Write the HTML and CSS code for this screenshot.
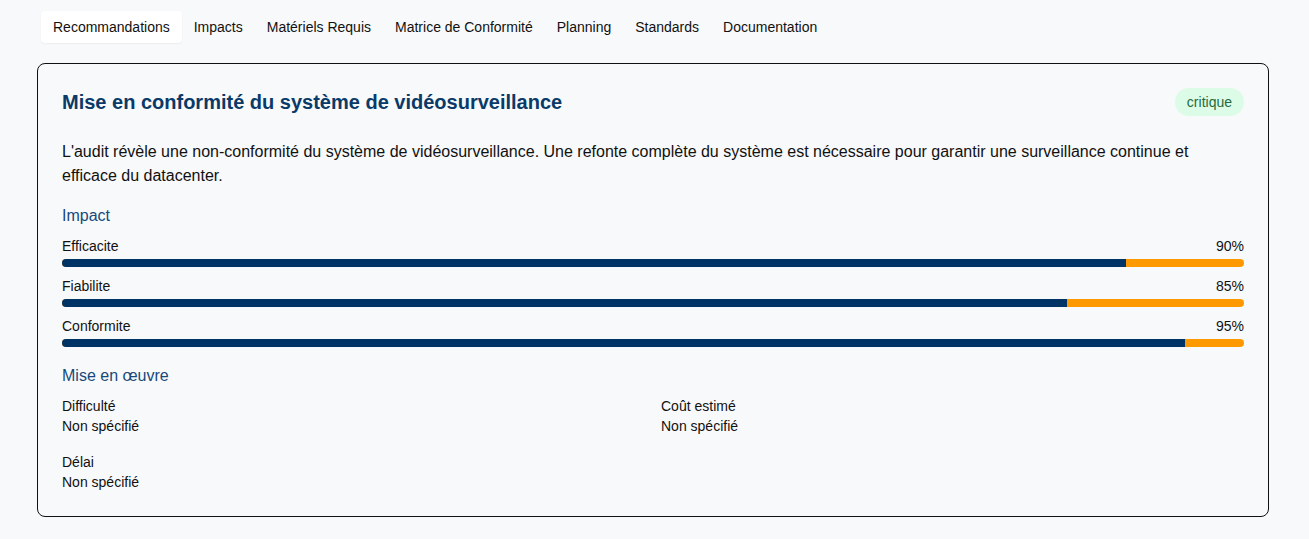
FILE: index.html
```html
<!DOCTYPE html>
<html lang="fr">
<head>
<meta charset="utf-8">
<title>Recommandations</title>
<link rel="stylesheet" href="styles.css">
</head>
<body>
<div class="page">
  <nav class="tabs">
    <div class="tab active">Recommandations</div>
    <div class="tab">Impacts</div>
    <div class="tab">Matériels Requis</div>
    <div class="tab">Matrice de Conformité</div>
    <div class="tab">Planning</div>
    <div class="tab">Standards</div>
    <div class="tab">Documentation</div>
  </nav>
  <section class="card">
    <header class="card-head">
      <h2 class="title">Mise en conformité du système de vidéosurveillance</h2>
      <span class="badge">critique</span>
    </header>
    <p class="desc">L'audit révèle une non-conformité du système de vidéosurveillance. Une refonte complète du système est nécessaire pour garantir une surveillance continue et efficace du datacenter.</p>
    <h3 class="section">Impact</h3>
    <div class="metrics">
      <div class="metric">
        <div class="metric-row"><span>Efficacite</span><span>90%</span></div>
        <div class="track"><div class="fill" style="width:90%"></div></div>
      </div>
      <div class="metric">
        <div class="metric-row"><span>Fiabilite</span><span>85%</span></div>
        <div class="track"><div class="fill" style="width:85%"></div></div>
      </div>
      <div class="metric">
        <div class="metric-row"><span>Conformite</span><span>95%</span></div>
        <div class="track"><div class="fill" style="width:95%"></div></div>
      </div>
    </div>
    <h3 class="section section-2">Mise en œuvre</h3>
    <div class="details">
      <div class="detail"><div>Difficulté</div><div>Non spécifié</div></div>
      <div class="detail"><div>Coût estimé</div><div>Non spécifié</div></div>
      <div class="detail"><div>Délai</div><div>Non spécifié</div></div>
    </div>
  </section>
</div>
</body>
</html>
```

FILE: styles.css
```css
* { box-sizing: border-box; }
html, body { margin: 0; padding: 0; }
body {
  background: #f8f9fb;
  font-family: "Liberation Sans", Arial, sans-serif;
  color: #111;
}
.page {
  padding: 7px 40px 20px 37px;
}
.tabs {
  display: flex;
  padding: 4px;
}
.tab {
  font-size: 14px;
  line-height: 16px;
  padding: 8px 12px;
  border-radius: 4px;
  color: #111;
}
.tab.active {
  background: #fff;
  box-shadow: 0 1px 2px rgba(0,0,0,0.05);
}
.card {
  margin-top: 16px;
  border: 1px solid #111;
  border-radius: 8px;
  background: #f8f9fb;
  padding: 24px;
}
.card-head {
  display: flex;
  justify-content: space-between;
  align-items: center;
}
.title {
  margin: 0;
  font-size: 20px;
  line-height: 28px;
  font-weight: bold;
  color: #0a3a68;
}
.badge {
  background: #dcfce7;
  color: #1f6b3f;
  font-size: 14px;
  line-height: 20px;
  padding: 4px 12px;
  border-radius: 999px;
}
.desc {
  margin: 24px 0 0;
  font-size: 16px;
  line-height: 24px;
  color: #111;
}
.section {
  margin: 16px 0 8px;
  font-size: 16px;
  line-height: 24px;
  font-weight: normal;
  color: #17497a;
}
.section-2 { margin-top: 17px; }
.metrics {
  display: flex;
  flex-direction: column;
  gap: 9px;
}
.metric-row {
  display: flex;
  justify-content: space-between;
  font-size: 14px;
  line-height: 20px;
  margin-bottom: 3px;
}
.track {
  height: 8px;
  border-radius: 999px;
  background: #ff9900;
  overflow: hidden;
}
.fill {
  height: 100%;
  background: #003366;
}
.details {
  display: grid;
  grid-template-columns: 1fr 1fr;
  gap: 16px;
  font-size: 14px;
  line-height: 20px;
}
```
